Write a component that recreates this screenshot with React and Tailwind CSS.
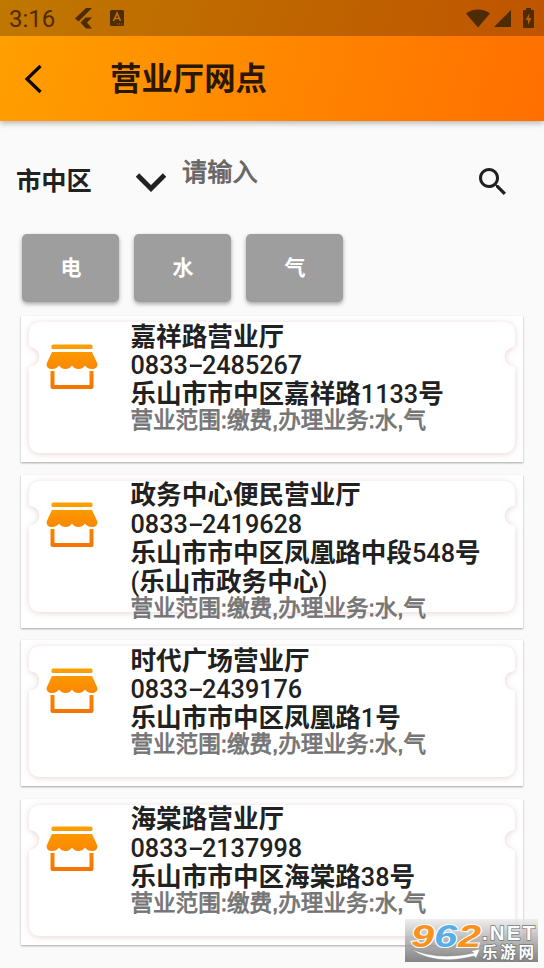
import React, { useState } from 'react';

const offices = [
  {
    name: '嘉祥路营业厅',
    phone: '0833-2485267',
    address: ['乐山市市中区嘉祥路1133号'],
    height: 'h-[146px]',
  },
  {
    name: '政务中心便民营业厅',
    phone: '0833-2419628',
    address: ['乐山市市中区凤凰路中段548号', '(乐山市政务中心)'],
    height: 'h-[153px]',
  },
  {
    name: '时代广场营业厅',
    phone: '0833-2439176',
    address: ['乐山市市中区凤凰路1号'],
    height: 'h-[146px]',
  },
  {
    name: '海棠路营业厅',
    phone: '0833-2137998',
    address: ['乐山市市中区海棠路38号'],
    height: 'h-[146px]',
  },
];

const StatusBar = () => (
  <div className="flex h-9 items-center bg-black/25 pl-[9px] pr-[10px] text-[#4f2b03]">
    <span className="w-[65px] pt-px font-[Roboto] text-[24px] leading-9">3:16</span>
    <svg className="ml-[1px] h-[21px] w-[17px]" viewBox="0 0 17 21" fill="currentColor">
      <path d="M11 0h6L3.5 13.5 0 10.5z" />
      <path d="M10.5 9.5H17L12 14.5 17 20.5H11L5.5 14.5z" />
    </svg>
    <svg className="ml-[18px] h-4 w-[14px]" viewBox="0 0 14 16">
      <rect width="14" height="16" rx="1.5" fill="currentColor" />
      <path d="M3.5 11 7 3l3.5 8M4.8 8.5h4.4" fill="none" stroke="#b87000" strokeWidth="1.7" />
      <path d="M7 14h1m1 0h1m1 0h1" stroke="#b87000" strokeWidth="1" />
    </svg>
    <div className="ml-auto flex items-center">
      <svg className="h-[19px] w-6" viewBox="0 0 24 19" fill="currentColor">
        <path d="M0 4.5C6.5-.7 17.5-.7 24 4.5L12 18.5z" />
      </svg>
      <svg className="ml-1 h-[17px] w-[17px]" viewBox="0 0 17 17" fill="currentColor">
        <path d="M17 0v17H0z" />
      </svg>
      <svg className="ml-3 h-5 w-[11px]" viewBox="0 0 11 20">
        <path d="M3 0h5v2h2q1 0 1 1v16q0 1-1 1H1q-1 0-1-1V3q0-1 1-1h2z" fill="currentColor" />
        <path d="M6.5 5 2.5 12H5v5l3.5-7H6z" fill="#b95b00" />
      </svg>
    </div>
  </div>
);

const Header = () => (
  <header className="h-[121px] shrink-0 bg-[linear-gradient(105deg,#ffa000_0%,#ff6f00_100%)] shadow-[0_2px_6px_rgba(0,0,0,0.3)]">
    <StatusBar />
    <div className="flex h-[85px] items-center pl-6">
      <svg className="h-[30px] w-[18px]" viewBox="0 0 18 30" fill="none" stroke="#0d0600" strokeWidth="3.2">
        <path d="M16.5 2 3 15l13.5 13" />
      </svg>
      <h1 className="ml-[68px] mt-[2px] text-[31.4px] font-bold leading-10 text-[#2b1600]">营业厅网点</h1>
    </div>
  </header>
);

const SearchRow = () => (
  <div className="flex h-[113px] items-center pl-4 pr-[38px]">
    <span className="mt-[6px] w-[120px] text-[25.2px] font-bold leading-8 text-[#212121]">市中区</span>
    <svg className="mt-[9px] h-[19px] w-[30px]" viewBox="0 0 30 19" fill="none" stroke="#212121" strokeWidth="4.8">
      <path d="M1.5 2 15 15.5 28.5 2" />
    </svg>
    <input
      placeholder="请输入"
      className="mb-[12px] ml-4 min-w-0 flex-1 bg-transparent text-[25.2px] leading-8 outline-none placeholder:text-[#666] [-webkit-text-stroke:0.8px_#666]"
    />
    <svg className="mt-[7px] h-[27px] w-[27px]" viewBox="3 3 17.5 17.5" fill="#212121">
      <path d="M15.5 14h-.79l-.28-.27C15.41 12.59 16 11.11 16 9.5 16 5.91 13.09 3 9.5 3S3 5.91 3 9.5 5.91 16 9.5 16c1.61 0 3.09-.59 4.23-1.57l.27.28v.79l5 4.99L20.49 19l-4.99-5zm-6 0C7.01 14 5 11.99 5 9.5S7.01 5 9.5 5 14 7.01 14 9.5 11.99 14 9.5 14z" />
    </svg>
  </div>
);

const Ticket = () => (
  <svg className="absolute left-0 top-0 h-[146px] w-[502px] overflow-visible" viewBox="0 0 502 146">
    <path
      className="drop-shadow-[0_1px_3px_rgba(150,60,60,0.22)]"
      fill="#fff"
      d="M20 6H482Q494 6 494 18V29Q494 31 491 31.5A9.5 9.5 0 0 0 491 50Q494 50.5 494 53V125Q494 137 482 137H20Q8 137 8 125V53Q8 50.5 11 50A9.5 9.5 0 0 0 11 31.5Q8 31 8 29V18Q8 6 20 6Z"
    />
  </svg>
);

const ShopIcon = () => (
  <svg className="h-[46px] w-[52px]" viewBox="0 0 52 46">
    <defs>
      <linearGradient id="shop" x1="0" y1="0" x2="0" y2="46" gradientUnits="userSpaceOnUse">
        <stop offset="0" stopColor="#ffa000" />
        <stop offset="1" stopColor="#f57300" />
      </linearGradient>
    </defs>
    <rect x="5.5" y="0.5" width="41" height="4.5" rx="1.5" fill="url(#shop)" />
    <path
      d="M6 8H46Q48 12 51.5 20Q51.5 25 46 25Q41.5 25 39 21.5Q36.5 25 32.5 25Q28.5 25 26 21.5Q23.5 25 19.5 25Q15.5 25 13 21.5Q10.5 25 6 25Q.5 25 .5 20Q4 12 6 8Z"
      fill="url(#shop)"
    />
    <path d="M6.5 27V43H45.5V27" fill="none" stroke="url(#shop)" strokeWidth="4" strokeLinejoin="round" />
  </svg>
);

const OfficeCard = ({ office }) => {
  const [area, number] = office.phone.split('-');

  return (
    <div className={`relative shrink-0 bg-white shadow-[0_1px_2px_rgba(0,0,0,0.35)] ${office.height}`}>
      <Ticket />
      <div className="relative flex pl-[24.5px] pt-[6px]">
        <div className="w-[85px] pt-[21.5px]">
          <ShopIcon />
        </div>
        <div className="whitespace-nowrap pt-[0.6px] text-[25.6px] font-bold leading-[28.7px] text-[#212121] [font-kerning:none]">
          <p>{office.name}</p>
          <p className="flex pt-px font-[Roboto] text-[25.2px] font-medium leading-[27.7px]">
            {area}
            <span className="w-[14.2px] origin-left scale-x-[1.85]">-</span>
            {number}
          </p>
          {office.address.map((line) => (
            <p key={line}>
              {line.split(/(\d+|[()])/).map((part, i) =>
                i % 2 ? (
                  <span key={i} className="font-[Roboto] text-[25.2px] font-medium">{part}</span>
                ) : (
                  part
                )
              )}
            </p>
          ))}
          <p className="-mt-[1.5px] text-[22.55px] font-normal leading-[26px] text-[#757575] [-webkit-text-stroke:0.8px_#757575]">
            营业范围:缴费,办理业务:水,气
          </p>
        </div>
      </div>
    </div>
  );
};

const Watermark = () => (
  <div className="absolute left-[405px] top-[919px] h-[43px] w-[133px] bg-linear-to-b from-[#e8e8e8]/70 to-[#777]/90">
    <svg className="h-full w-full" viewBox="0 0 133 43" fontFamily="'Liberation Sans','Noto Sans CJK SC',sans-serif">
      <g fontSize="32" fontWeight="bold" fontStyle="italic" stroke="#fff" strokeWidth="2" paintOrder="stroke">
        <text transform="translate(6 27.5) scale(1.3 1)" fill="#f7931e">9</text>
        <text transform="translate(29 27.5) scale(1.3 1)" fill="#5aaee8">6</text>
        <text transform="translate(53 27.5) scale(1.3 1)" fill="#f7931e">2</text>
      </g>
      <path d="M6 30Q32 42 69 34L66 32 75 30 71 39 69 37Q30 47 6 30Z" fill="#fff" stroke="#888" strokeWidth=".4" />
      <g fill="#fff" stroke="#777" strokeWidth="1.4" paintOrder="stroke" fontWeight="bold">
        <text x="77" y="21" fontSize="20.5" textLength="53">.NET</text>
        <text x="77" y="39" fontSize="15.5" textLength="52">乐游网</text>
      </g>
    </svg>
  </div>
);

const App = () => {
  const [types] = useState(['电', '水', '气']);

  return (
    <div className="relative flex h-[968px] w-[544px] flex-col overflow-hidden bg-[#fafafa] font-['Liberation_Sans','Noto_Sans_CJK_SC',sans-serif]">
      <Header />
      <SearchRow />
      <div className="flex gap-[15px] pl-[22.4px]">
        {types.map((type) => (
          <button
            key={type}
            className="h-[68px] w-[97px] rounded-[5px] bg-[#9e9e9e] text-[21px] font-bold text-white shadow-[0_2px_4px_rgba(0,0,0,0.35)]"
          >
            {type}
          </button>
        ))}
      </div>
      <div className="mt-[14px] flex flex-col gap-[12.5px] pl-[21px] pr-[21px]">
        {offices.map((office) => (
          <OfficeCard key={office.name} office={office} />
        ))}
      </div>
      <Watermark />
    </div>
  );
};

export default App;
